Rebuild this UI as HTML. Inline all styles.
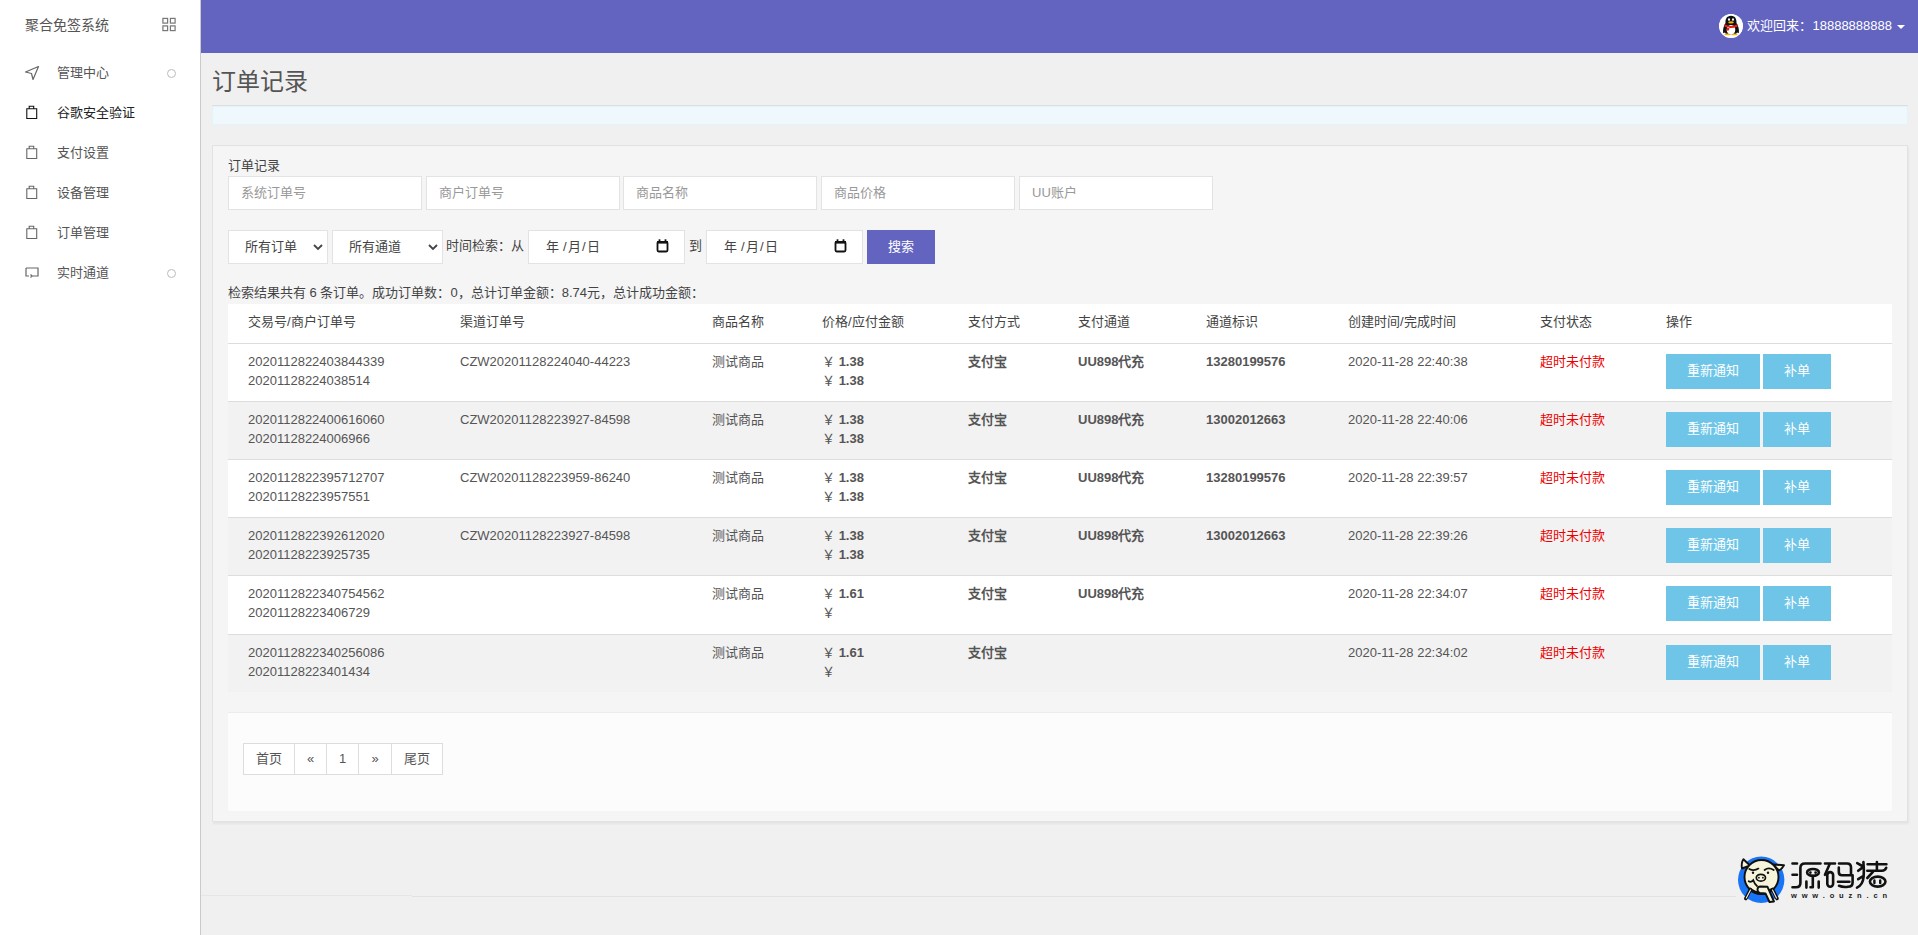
<!DOCTYPE html>
<html lang="zh-CN"><head><meta charset="utf-8">
<style>
*{box-sizing:border-box;margin:0;padding:0}
html,body{width:1918px;height:935px;overflow:hidden;background:#f0f0f0;font-family:"Liberation Sans",sans-serif;color:#555;font-size:13px}
b{font-weight:bold}
#side{position:absolute;left:0;top:0;width:201px;height:935px;background:#fff;border-right:1px solid #cbcbcb}
.brand{position:absolute;left:25px;top:16px;font-size:14px;color:#555;line-height:18px}
.gridic{position:absolute;left:161px;top:17px;width:16px;height:15px}
.mi{position:absolute;left:0;width:200px;height:40px}
.mi .ic{position:absolute;left:24px;top:12px;width:16px;height:16px}
.mi .t{position:absolute;left:57px;top:12px;font-size:13px;line-height:16px;color:#555}
.mi.act .t{color:#222}
.mi .dot{position:absolute;left:167px;top:16px;width:9px;height:9px;border:1px solid #bbb;border-radius:50%}
#hdr{position:absolute;left:201px;top:0;width:1717px;height:53px;background:#6264c0}
.user{position:absolute;right:13px;top:14px;height:24px;color:#fff;font-size:13px;line-height:24px;white-space:nowrap}
.avatar{position:absolute;left:-28px;top:0;width:24px;height:24px;border-radius:50%;background:#fff;overflow:hidden}
.caret{display:inline-block;width:0;height:0;border-left:4px solid transparent;border-right:4px solid transparent;border-top:4px solid #fff;margin-left:5px;vertical-align:middle}
h1{position:absolute;left:212px;top:67px;font-size:24px;font-weight:normal;color:#555;line-height:30px}
.alert{position:absolute;left:212px;top:106px;width:1696px;height:19px;background:#eff8fc;border:1px solid #e4f3f9;box-shadow:0 -1px 0 #dedede}
#panel{position:absolute;left:212px;top:145px;width:1696px;height:677px;background:#f5f5f5;border:1px solid #e2e2e2;box-shadow:1px 2px 2px rgba(0,0,0,.05)}
.plabel{position:absolute;left:15px;top:12px;font-size:13px;line-height:16px;color:#444}
.inp{position:absolute;top:30px;height:34px;width:194px;background:#fff;border:1px solid #e3e3e3;color:#999;font-size:13px;line-height:32px;padding-left:12px}
.sel{position:absolute;top:84px;height:34px;background:#fff;border:1px solid #e3e3e3;color:#444;font-size:13px;line-height:32px;padding-left:16px}
.chev{position:absolute;top:13px;line-height:0}
.lbl{position:absolute;top:84px;line-height:32px;font-size:13px;color:#444}
.date{position:absolute;top:84px;height:34px;width:157px;background:#fff;border:1px solid #e3e3e3;color:#444;font-size:13px;line-height:32px;padding-left:16px}
.cal{position:absolute;left:126.5px;top:8px;line-height:0}
.dt{position:absolute;top:0}
.btn{position:absolute;top:84px;width:68px;height:34px;background:#6264c0;color:#fff;font-size:13px;line-height:34px;text-align:center}
.sum{position:absolute;left:15px;top:139px;font-size:13px;line-height:16px;color:#444}
.sum b{font-weight:bold}
.tbl{position:absolute;left:15px;top:158px;width:1664px}
.thead{position:relative;height:40px;background:#fff;border-bottom:1px solid #ddd}
.thead span{position:absolute;top:10px;line-height:16px;color:#444}
.tr{position:relative;height:58px;border-bottom:1px solid #ddd}
.tr.r5{height:59px}
.tr:last-child{border-bottom:none;height:57px}
.tr.odd{background:#fff}
.tr.even{background:#f2f2f2}
.tr .c{position:absolute;top:8px;line-height:19px;color:#555;white-space:nowrap}
.red{color:#e00}
.b1,.b2{position:absolute;top:10px;height:35px;background:#6ec5e8;color:#fff;line-height:33px;text-align:center}
.b1{left:1438px;width:94px}
.b2{left:1535px;width:68px}
.foot{position:absolute;left:15px;top:566px;width:1664px;height:99px;background:#fcfcfc;border-top:1px solid #ececec;border-radius:0 0 3px 3px}
.pg{position:absolute;left:15px;top:30px;height:32px;display:flex;border:1px solid #ddd;background:#fff}
.pg span{display:block;height:30px;line-height:30px;text-align:center;border-left:1px solid #ddd;color:#555}
.pg span:first-child{border-left:none}
.hr1{position:absolute;left:201px;top:895px;width:211px;height:1px;background:#e6e6e6}
.hr2{position:absolute;left:412px;top:896px;width:1324px;height:1px;background:#e2e2e2}
.logo{position:absolute;left:1734px;top:853px}
</style></head><body>
<div id="side">
<div class="brand">聚合免签系统</div>
<svg class="gridic" viewBox="0 0 16 16" fill="none" stroke="#777" stroke-width="1.3"><rect x="1.5" y="1.5" width="5" height="5"/><rect x="9.5" y="1.5" width="5" height="5"/><rect x="1.5" y="9.5" width="5" height="5"/><rect x="9.5" y="9.5" width="5" height="5"/></svg>
<div class="mi" style="top:53px"><svg class="ic" viewBox="0 0 16 16" fill="none" stroke="#666" stroke-width="1.2" stroke-linejoin="round"><path d="M14.5 1.5 L1.5 7 L7.5 8.5 L9 14.5 Z"/></svg><span class="t">管理中心</span><span class=dot></span></div>
<div class="mi act" style="top:93px"><svg class="ic" viewBox="0 0 16 16" fill="none" stroke="#111" stroke-width="1.1"><path d="M2.8 3.8 H12.7 V13.5 H2.8 Z M5.2 3.8 V1.3 H9.7 V3.8"/></svg><span class="t">谷歌安全验证</span></div>
<div class="mi" style="top:133px"><svg class="ic" viewBox="0 0 16 16" fill="none" stroke="#666" stroke-width="1.1"><path d="M2.8 3.8 H12.7 V13.5 H2.8 Z M5.2 3.8 V1.3 H9.7 V3.8"/></svg><span class="t">支付设置</span></div>
<div class="mi" style="top:173px"><svg class="ic" viewBox="0 0 16 16" fill="none" stroke="#666" stroke-width="1.1"><path d="M2.8 3.8 H12.7 V13.5 H2.8 Z M5.2 3.8 V1.3 H9.7 V3.8"/></svg><span class="t">设备管理</span></div>
<div class="mi" style="top:213px"><svg class="ic" viewBox="0 0 16 16" fill="none" stroke="#666" stroke-width="1.1"><path d="M2.8 3.8 H12.7 V13.5 H2.8 Z M5.2 3.8 V1.3 H9.7 V3.8"/></svg><span class="t">订单管理</span></div>
<div class="mi" style="top:253px"><svg class="ic" viewBox="0 0 16 16" fill="none" stroke="#666" stroke-width="1.2"><path d="M2 3 H14 V11 H8 M5 11 H2 V3 M8 11 L6.5 9.5 M8 11 L6.5 12.5"/></svg><span class="t">实时通道</span><span class=dot></span></div>
</div>
<div id="hdr"><div class="user"><span class="avatar"><svg viewBox="0 0 24 24" width="24" height="24"><circle cx="12" cy="12" r="12" fill="#fff"/><path d="M12 1.8 C7.5 1.8 6.3 5.5 6.5 9 C4.5 12 3.6 16 4.2 19.2 L6 18.6 C6.5 20 8 20.6 12 20.6 C16 20.6 17.5 20 18 18.6 L19.8 19.2 C20.4 16 19.5 12 17.5 9 C17.7 5.5 16.5 1.8 12 1.8 Z" fill="#111"/><ellipse cx="12" cy="15.8" rx="4.3" ry="4.9" fill="#fff"/><path d="M5.3 10.3 Q12 13.6 18.7 10.3 L18.6 12.6 Q12 15.6 5.4 12.6 Z M8.2 13 L7.6 16.8 L9.8 16.4 L10.6 13.6 Z" fill="#e8211c"/><ellipse cx="10" cy="5.6" rx="1" ry="1.3" fill="#fff"/><ellipse cx="14" cy="5.6" rx="1" ry="1.3" fill="#fff"/><ellipse cx="12" cy="8.4" rx="2.8" ry="1.1" fill="#f5b400"/><ellipse cx="8.3" cy="20.4" rx="3" ry="0.9" fill="#f5b400"/><ellipse cx="15.7" cy="20.4" rx="3" ry="0.9" fill="#f5b400"/></svg></span>欢迎回来：18888888888<span class="caret"></span></div></div>
<h1>订单记录</h1>
<div class="alert"></div>
<div id="panel"><div class="plabel">订单记录</div>
<div class="inp" style="left:15px">系统订单号</div>
<div class="inp" style="left:213px">商户订单号</div>
<div class="inp" style="left:410px">商品名称</div>
<div class="inp" style="left:608px">商品价格</div>
<div class="inp" style="left:806px">UU账户</div>
<div class="sel" style="left:15px;width:100px">所有订单<span class="chev" style="left:84px"><svg width="10" height="7" viewBox="0 0 10 7"><path d="M1 1 L5 5 L9 1" fill="none" stroke="#444" stroke-width="1.8"/></svg></span></div>
<div class="sel" style="left:119px;width:111px">所有通道<span class="chev" style="left:95px"><svg width="10" height="7" viewBox="0 0 10 7"><path d="M1 1 L5 5 L9 1" fill="none" stroke="#444" stroke-width="1.8"/></svg></span></div>
<div class="lbl" style="left:233px">时间检索：从</div>
<div class="date" style="left:315px"><span class="dt" style="left:16.5px">年</span><span class="dt" style="left:34px">/</span><span class="dt" style="left:38.5px">月</span><span class="dt" style="left:53px">/</span><span class="dt" style="left:57.5px">日</span><span class="cal"><svg width="13" height="14" viewBox="0 0 13 14"><rect x="1.5" y="2.9" width="10" height="9.6" rx="1.2" fill="none" stroke="#111" stroke-width="1.8"/><rect x="1" y="2" width="11" height="2.6" fill="#111"/><rect x="2.6" y="0.3" width="1.8" height="2.5" fill="#111"/><rect x="8.6" y="0.3" width="1.8" height="2.5" fill="#111"/></svg></span></div>
<div class="lbl" style="left:476px">到</div>
<div class="date" style="left:493px"><span class="dt" style="left:16.5px">年</span><span class="dt" style="left:34px">/</span><span class="dt" style="left:38.5px">月</span><span class="dt" style="left:53px">/</span><span class="dt" style="left:57.5px">日</span><span class="cal"><svg width="13" height="14" viewBox="0 0 13 14"><rect x="1.5" y="2.9" width="10" height="9.6" rx="1.2" fill="none" stroke="#111" stroke-width="1.8"/><rect x="1" y="2" width="11" height="2.6" fill="#111"/><rect x="2.6" y="0.3" width="1.8" height="2.5" fill="#111"/><rect x="8.6" y="0.3" width="1.8" height="2.5" fill="#111"/></svg></span></div>
<div class="btn" style="left:654px">搜索</div>
<div class="sum">检索结果共有 6 条订单。成功订单数：0，总计订单金额：8.74元，总计成功金额：</div>
<div class="tbl">
<div class="thead"><span style="left:20px">交易号/商户订单号</span><span style="left:232px">渠道订单号</span><span style="left:484px">商品名称</span><span style="left:594px">价格/应付金额</span><span style="left:740px">支付方式</span><span style="left:850px">支付通道</span><span style="left:978px">通道标识</span><span style="left:1120px">创建时间/完成时间</span><span style="left:1312px">支付状态</span><span style="left:1438px">操作</span></div>
<div class="tr odd r1"><span class="c" style="left:20px">2020112822403844339<br>20201128224038514</span><span class="c" style="left:232px">CZW20201128224040-44223</span><span class="c" style="left:484px">测试商品</span><span class="c" style="left:594px">￥ <b>1.38</b><br>￥ <b>1.38</b></span><span class="c" style="left:740px"><b>支付宝</b></span><span class="c" style="left:850px"><b>UU898代充</b></span><span class="c" style="left:978px"><b>13280199576</b></span><span class="c" style="left:1120px">2020-11-28 22:40:38</span><span class="c" style="left:1312px"><span class="red">超时未付款</span></span><span class="b1">重新通知</span><span class="b2">补单</span></div>
<div class="tr even r2"><span class="c" style="left:20px">2020112822400616060<br>20201128224006966</span><span class="c" style="left:232px">CZW20201128223927-84598</span><span class="c" style="left:484px">测试商品</span><span class="c" style="left:594px">￥ <b>1.38</b><br>￥ <b>1.38</b></span><span class="c" style="left:740px"><b>支付宝</b></span><span class="c" style="left:850px"><b>UU898代充</b></span><span class="c" style="left:978px"><b>13002012663</b></span><span class="c" style="left:1120px">2020-11-28 22:40:06</span><span class="c" style="left:1312px"><span class="red">超时未付款</span></span><span class="b1">重新通知</span><span class="b2">补单</span></div>
<div class="tr odd r3"><span class="c" style="left:20px">2020112822395712707<br>20201128223957551</span><span class="c" style="left:232px">CZW20201128223959-86240</span><span class="c" style="left:484px">测试商品</span><span class="c" style="left:594px">￥ <b>1.38</b><br>￥ <b>1.38</b></span><span class="c" style="left:740px"><b>支付宝</b></span><span class="c" style="left:850px"><b>UU898代充</b></span><span class="c" style="left:978px"><b>13280199576</b></span><span class="c" style="left:1120px">2020-11-28 22:39:57</span><span class="c" style="left:1312px"><span class="red">超时未付款</span></span><span class="b1">重新通知</span><span class="b2">补单</span></div>
<div class="tr even r4"><span class="c" style="left:20px">2020112822392612020<br>20201128223925735</span><span class="c" style="left:232px">CZW20201128223927-84598</span><span class="c" style="left:484px">测试商品</span><span class="c" style="left:594px">￥ <b>1.38</b><br>￥ <b>1.38</b></span><span class="c" style="left:740px"><b>支付宝</b></span><span class="c" style="left:850px"><b>UU898代充</b></span><span class="c" style="left:978px"><b>13002012663</b></span><span class="c" style="left:1120px">2020-11-28 22:39:26</span><span class="c" style="left:1312px"><span class="red">超时未付款</span></span><span class="b1">重新通知</span><span class="b2">补单</span></div>
<div class="tr odd r5"><span class="c" style="left:20px">2020112822340754562<br>20201128223406729</span><span class="c" style="left:232px"></span><span class="c" style="left:484px">测试商品</span><span class="c" style="left:594px">￥ <b>1.61</b><br>￥ <b></b></span><span class="c" style="left:740px"><b>支付宝</b></span><span class="c" style="left:850px"><b>UU898代充</b></span><span class="c" style="left:978px"><b></b></span><span class="c" style="left:1120px">2020-11-28 22:34:07</span><span class="c" style="left:1312px"><span class="red">超时未付款</span></span><span class="b1">重新通知</span><span class="b2">补单</span></div>
<div class="tr even r6"><span class="c" style="left:20px">2020112822340256086<br>20201128223401434</span><span class="c" style="left:232px"></span><span class="c" style="left:484px">测试商品</span><span class="c" style="left:594px">￥ <b>1.61</b><br>￥ <b></b></span><span class="c" style="left:740px"><b>支付宝</b></span><span class="c" style="left:850px"><b></b></span><span class="c" style="left:978px"><b></b></span><span class="c" style="left:1120px">2020-11-28 22:34:02</span><span class="c" style="left:1312px"><span class="red">超时未付款</span></span><span class="b1">重新通知</span><span class="b2">补单</span></div>
</div>
<div class="foot"><div class="pg"><span style="width:50px">首页</span><span style="width:32px">«</span><span style="width:32px">1</span><span style="width:33px">»</span><span style="width:51px">尾页</span></div></div></div>
<div class="hr1"></div><div class="hr2"></div>
<svg class="logo" width="160" height="52" viewBox="1734 853 160 52">
<circle cx="1761.2" cy="879.8" r="23.2" fill="#1a74f6"/>
<g stroke="#111" stroke-width="1.9" stroke-linejoin="round" stroke-linecap="round" fill="#f6f5dc">
<path d="M1743.4 859.2 L1750 865.5 L1742 868.5 Q1741 863 1743.4 859.2 Z"/>
<path d="M1773 864.5 L1784 865.2 Q1782 869 1779 870.5 Z"/>
<circle cx="1761.5" cy="877" r="17"/>
<ellipse cx="1760.9" cy="877.7" rx="4.6" ry="3.4" stroke-width="1.7"/>
</g>
<g stroke="#111" stroke-width="1.8" stroke-linecap="round" fill="none">
<path d="M1749.3 868.9 Q1753.8 871.6 1758.4 868.6"/>
<path d="M1764.6 870 Q1768.6 866.8 1773.7 870"/>
<path d="M1748.7 881.3 Q1751 882.8 1753.3 880.2 Q1754.5 884 1757 886"/>
<path d="M1750 889.5 Q1761 897 1772 889.5" stroke-width="3"/>
<path d="M1745.8 898.5 L1750.5 889.5 M1777 898.5 L1772.5 889.5" stroke-width="3.6"/>
<path d="M1746.3 898 L1750.5 890 M1776.5 898 L1772.5 890" stroke="#f6f5dc" stroke-width="1.1"/>
</g>
<path d="M1757.5 889.5 Q1757.5 886.5 1760.5 886.5 L1767.5 886.8 L1774 901.5 L1769.5 902 L1765.5 893.5 L1760 893 Q1757.5 892.5 1757.5 889.5 Z" fill="#f6f5dc" stroke="#111" stroke-width="1.9" stroke-linejoin="round"/>
<circle cx="1753" cy="872.8" r="1.2" fill="#111"/><circle cx="1768" cy="872.8" r="1.2" fill="#111"/>
<circle cx="1758.9" cy="877.7" r="0.9" fill="#111"/><circle cx="1762.9" cy="877.7" r="0.9" fill="#111"/>
<g stroke="#111" stroke-width="2.6" stroke-linecap="round" stroke-linejoin="round" fill="none">
<path d="M1792.5 863.5 H1797 M1792.5 874.8 H1797 M1792.5 887.2 H1796 Q1800.4 887.2 1800.4 883 V868 Q1800.4 863.5 1805 863.5 H1820.5"/>
<ellipse cx="1813" cy="872.4" rx="5.9" ry="3.4"/>
<path d="M1810.4 872.6 h0.01 M1815.6 872.6 h0.01" stroke-width="2.8"/>
<path d="M1812.8 876 V887.2 H1810.5 M1806.4 881.6 V887.6 M1818.7 881.6 V887.6"/>
<path d="M1825 863.5 H1835 M1829.5 864.6 L1825 874.8"/>
<rect x="1827.3" y="872.1" width="5.8" height="14.6" rx="2.9"/>
<path d="M1839 863.5 H1847 Q1851 863.5 1851 867.5 V874.5 M1838.8 867.5 V872 Q1838.8 875.2 1842 875.2 H1852.6 V882.5 Q1852.6 886.8 1848 886.8 Q1843 887.5 1839 885.8 M1838 881.7 H1849.4"/>
<path d="M1857.2 863.2 L1862.3 866 M1863.4 862 Q1864.2 870 1863.6 877 Q1862.8 885 1857 887.6 M1858.2 870.8 L1862.7 867.4 M1858.2 879.2 L1862.7 876.4"/>
<path d="M1867.6 864.2 H1886.4 M1876.9 862 V870.4 M1867.3 870.8 H1882 Q1885 870.8 1886.2 867.8 M1872.9 871.9 L1867.3 878"/>
<ellipse cx="1877.7" cy="881.6" rx="7.8" ry="5"/>
<path d="M1874.4 880.4 V883 M1880.2 880.4 V883" stroke-width="2.4"/>
</g>
<text x="1791" y="898.4" font-family="Liberation Sans" font-weight="bold" font-size="7.5" fill="#1a1a1a" textLength="96" lengthAdjust="spacing">www.ouzn.cn</text>
</svg>
</body></html>
